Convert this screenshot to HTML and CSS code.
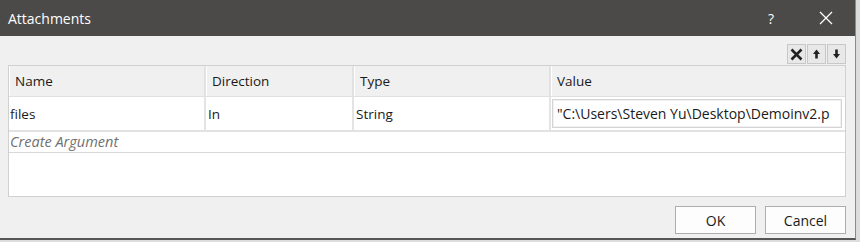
FILE: index.html
```html
<!DOCTYPE html>
<html lang="en">
<head>
    <meta charset="UTF-8">
    <title>Attachments</title>
    <link rel="stylesheet" href="styles.css">
</head>
<body>
    <div class="dialog">
        <div class="titlebar">
            <span class="title">Attachments</span>
            <span class="help">?</span>
            <span class="close">
                <svg width="14" height="14" viewBox="0 0 14 14"><path d="M1 1 L13 13 M13 1 L1 13" stroke="#fff" stroke-width="1.3"/></svg>
            </span>
        </div>
        <div class="body">
            <div class="toolbar">
                <button class="tool">
                    <svg width="13" height="13" viewBox="0 0 13 13"><path d="M1.5 1.5 L11.5 11.5 M11.5 1.5 L1.5 11.5" stroke="#222" stroke-width="2.6"/></svg>
                </button>
                <button class="tool">
                    <svg width="11" height="12" viewBox="0 0 11 12"><path d="M5.5 1.5 L2 6 H4.2 V10.5 H6.8 V6 H9 Z" fill="#222"/></svg>
                </button>
                <button class="tool">
                    <svg width="11" height="12" viewBox="0 0 11 12"><path d="M5.5 10.5 L2 6 H4.2 V1.5 H6.8 V6 H9 Z" fill="#222"/></svg>
                </button>
            </div>
            <div class="grid">
                <table>
                    <thead>
                        <tr>
                            <th class="col-name">Name</th>
                            <th class="col-dir">Direction</th>
                            <th class="col-type">Type</th>
                            <th>Value</th>
                        </tr>
                    </thead>
                    <tbody>
                        <tr class="row">
                            <td>files</td>
                            <td>In</td>
                            <td>String</td>
                            <td class="value-cell"><div class="value-box">"C:\Users\Steven Yu\Desktop\Demoinv2.p</div></td>
                        </tr>
                        <tr class="create">
                            <td colspan="4">Create Argument</td>
                        </tr>
                    </tbody>
                </table>
            </div>
            <div class="buttons">
                <button class="btn">OK</button>
                <button class="btn">Cancel</button>
            </div>
        </div>
    </div>
</body>
</html>
```

FILE: styles.css
```css
body {
    margin: 0;
    background: #dcdcdc;
    font-family: "Open Sans", "Noto Sans", sans-serif;
    overflow: hidden;
}
.dialog {
    width: 855px;
    height: 238px;
    background: #f0f0f0;
    border-right: 1px solid #8a8a8a;
    border-bottom: 2px solid #555;
    display: flex;
    flex-direction: column;
}
.titlebar {
    height: 36px;
    background: #4b4a48;
    color: #fff;
    display: flex;
    align-items: center;
    padding-left: 8px;
    flex-shrink: 0;
}
.title {
    font-size: 14px;
    flex: 1;
}
.help {
    font-size: 14px;
    width: 20px;
    margin-right: 38px;
    text-align: center;
}
.close {
    width: 14px;
    height: 14px;
    margin-right: 22px;
    display: flex;
}
.body {
    padding: 8px 9px 0 8px;
    display: flex;
    flex-direction: column;
}
.toolbar {
    display: flex;
    justify-content: flex-end;
    gap: 1px;
    height: 20px;
    margin-bottom: 1px;
}
.tool {
    width: 19px;
    height: 20px;
    padding: 0;
    border: 1px solid #c8c8c8;
    background: #e8e8e8;
    display: flex;
    align-items: center;
    justify-content: center;
}
.grid {
    height: 130px;
    background: #fff;
    border: 1px solid #d0d0d0;
}
table {
    width: 100%;
    border-collapse: collapse;
    font-size: 13.5px;
    color: #1a1a1a;
}
th {
    height: 30px;
    background: #f0f0f0;
    font-weight: normal;
    text-align: left;
    padding: 0 0 0 6px;
    border-right: 2px solid #e2e2e2;
    border-bottom: 1px solid #e0e0e0;
    box-shadow: inset 1px 0 0 #fff;
}
th:last-child {
    border-right: none;
}
.col-name {
    width: 189px;
}
.col-dir {
    width: 140px;
}
.col-type {
    width: 189px;
}
.row td {
    height: 31px;
    padding: 0 0 0 1px;
    border-right: 2px solid #e4e4e4;
    border-bottom: 2px solid #e2e2e2;
}
.row td:nth-child(2),
.row td:nth-child(3) {
    padding-left: 2px;
}
.row td:last-child {
    border-right: none;
}
.value-cell {
    padding: 1px 3px 1px 1px !important;
}
.value-box {
    height: 27px;
    border: 1px solid #d4d4d4;
    box-shadow: inset 0 0 0 1px #f2f2f2;
    line-height: 27px;
    padding-left: 4px;
    white-space: nowrap;
    overflow: hidden;
    font-size: 14px;
}
.create td {
    height: 20px;
    line-height: 20px;
    padding: 0 0 0 1px;
    font-size: 14.5px;
    font-style: italic;
    color: #707070;
    border-bottom: 1px solid #d8d8d8;
}
.buttons {
    display: flex;
    justify-content: flex-end;
    gap: 9px;
    margin-top: 9px;
}
.btn {
    width: 81px;
    height: 28px;
    background: #fdfdfd;
    border: 1px solid #adadad;
    font-family: inherit;
    font-size: 14px;
    color: #1a1a1a;
}
```
